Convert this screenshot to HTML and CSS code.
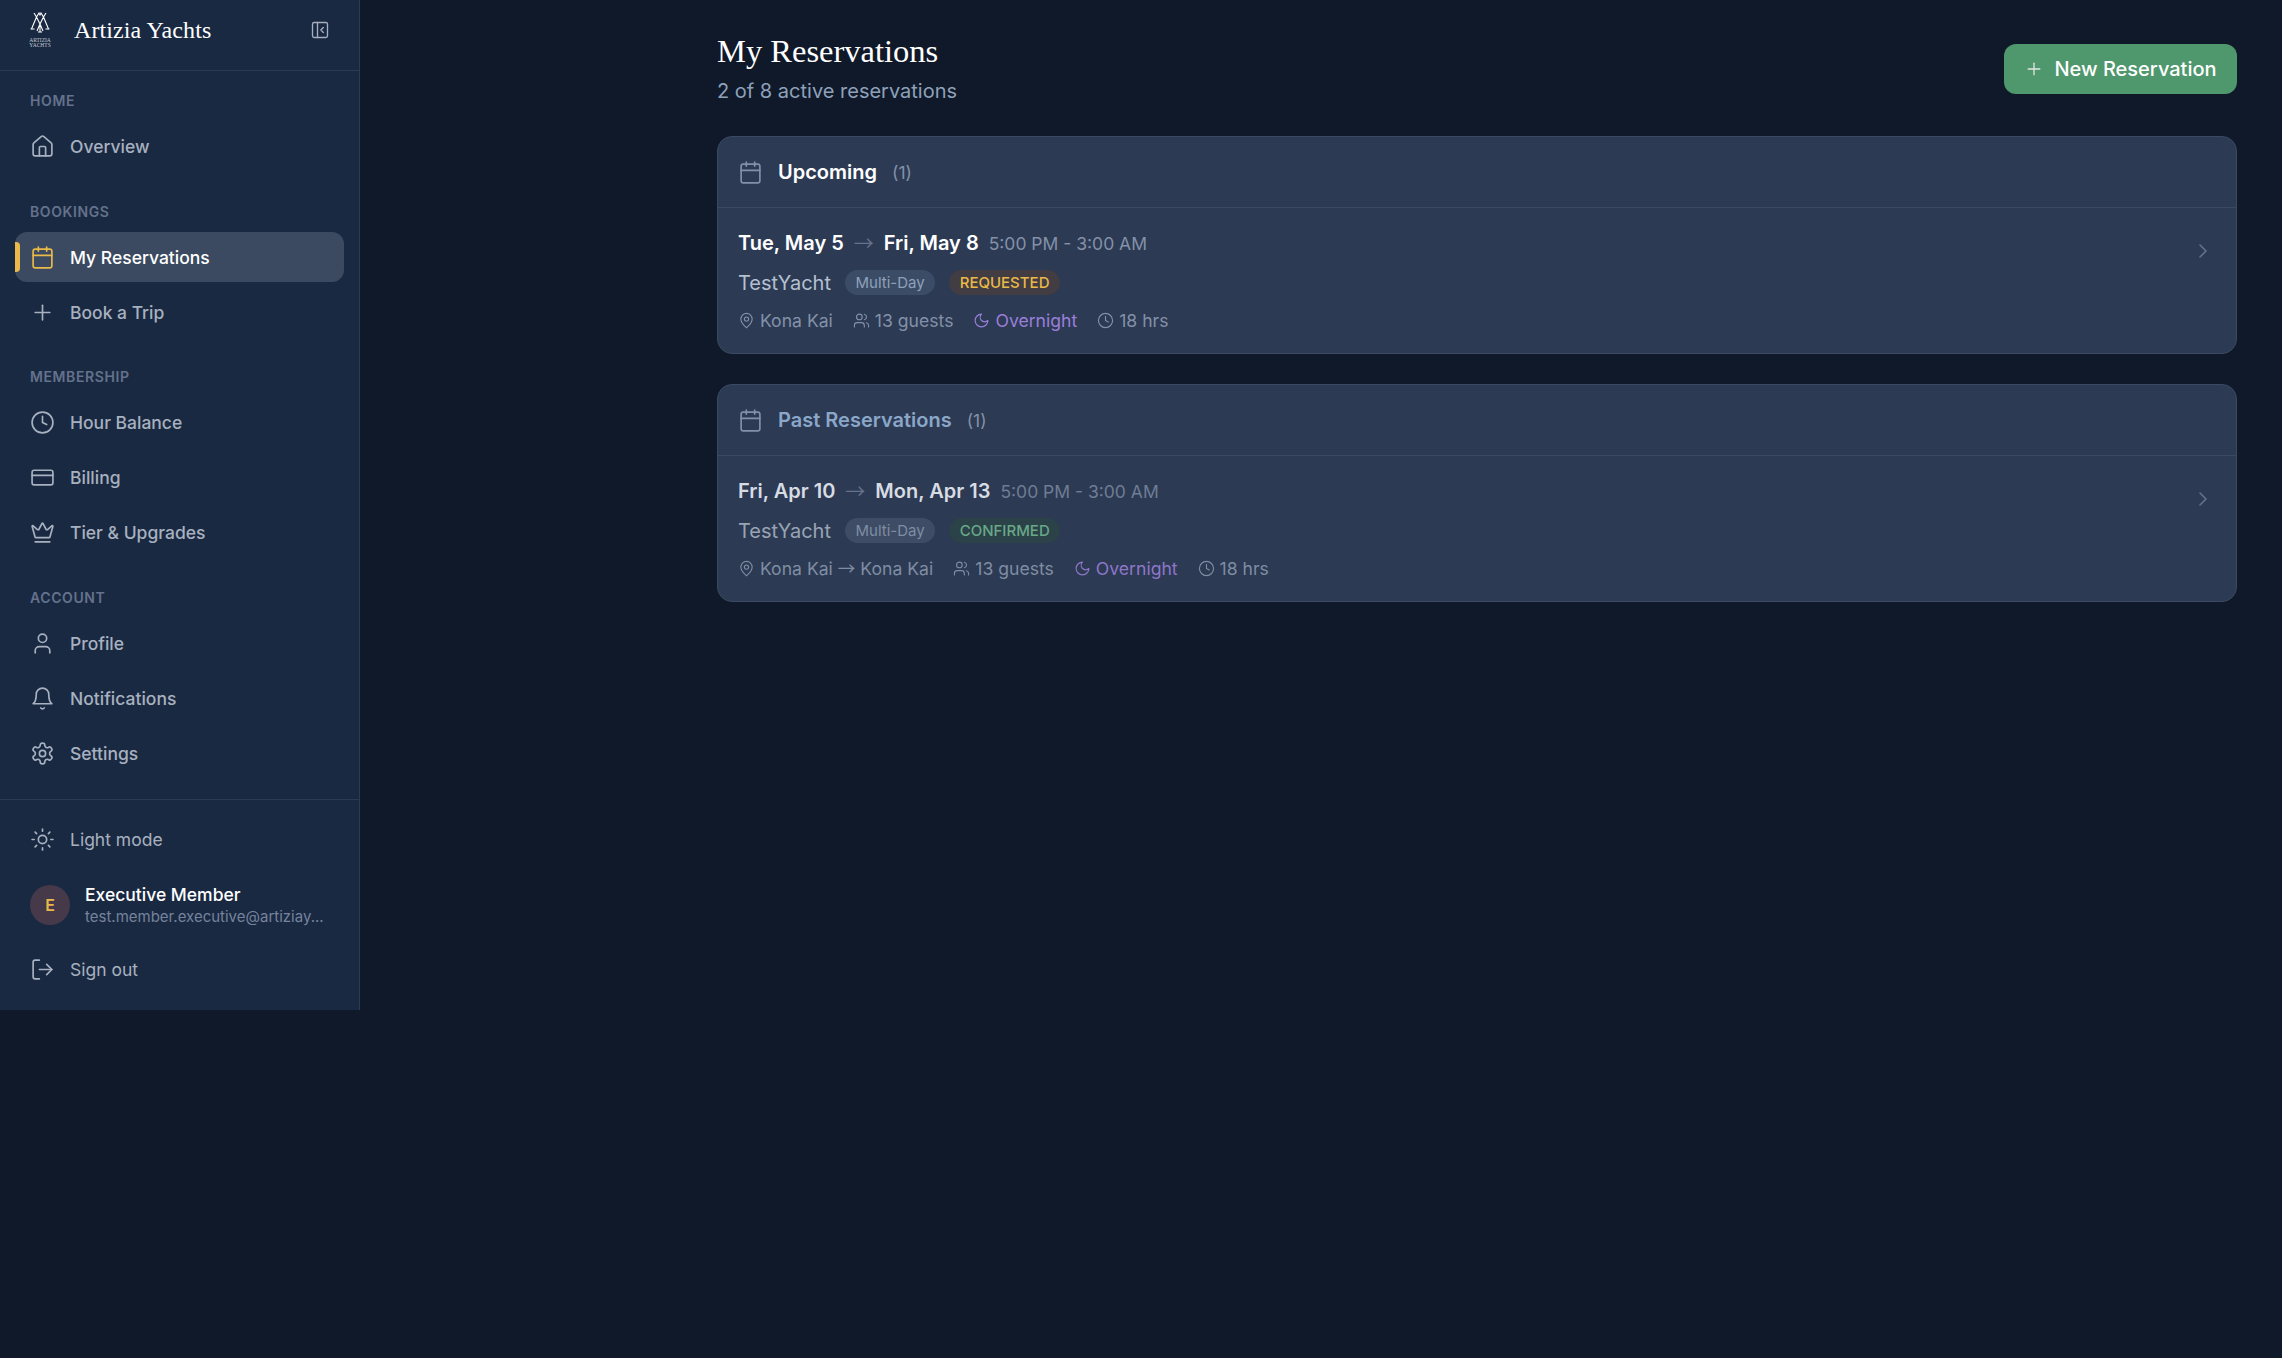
FILE: index.html
```html
<!DOCTYPE html>
<html lang="en">
<head>
    <meta charset="UTF-8">
    <meta name="viewport" content="width=device-width, initial-scale=1.0">
    <title>My Reservations - Artizia Yachts</title>
    <link rel="stylesheet" href="styles.css">
</head>
<body>
    <svg class="icon-defs" aria-hidden="true">
        <symbol id="i-home" viewBox="0 0 24 24"><path d="M15 21v-8a1 1 0 0 0-1-1h-4a1 1 0 0 0-1 1v8"/><path d="M3 10a2 2 0 0 1 .709-1.528l7-5.999a2 2 0 0 1 2.582 0l7 5.999A2 2 0 0 1 21 10v9a2 2 0 0 1-2 2H5a2 2 0 0 1-2-2z"/></symbol>
        <symbol id="i-calendar" viewBox="0 0 24 24"><path d="M8 2v4"/><path d="M16 2v4"/><rect width="18" height="18" x="3" y="4" rx="2"/><path d="M3 10h18"/></symbol>
        <symbol id="i-plus" viewBox="0 0 24 24"><path d="M5 12h14"/><path d="M12 5v14"/></symbol>
        <symbol id="i-clock" viewBox="0 0 24 24"><circle cx="12" cy="12" r="10"/><polyline points="12 6 12 12 16 14"/></symbol>
        <symbol id="i-card" viewBox="0 0 24 24"><rect width="20" height="14" x="2" y="5" rx="2"/><line x1="2" x2="22" y1="10" y2="10"/></symbol>
        <symbol id="i-crown" viewBox="0 0 24 24"><path d="M11.562 3.266a.5.5 0 0 1 .876 0L15.39 8.87a1 1 0 0 0 1.516.294L21.183 5.5a.5.5 0 0 1 .798.519l-2.834 10.246a1 1 0 0 1-.956.734H5.81a1 1 0 0 1-.957-.734L2.02 6.02a.5.5 0 0 1 .798-.519l4.276 3.664a1 1 0 0 0 1.516-.294z"/><path d="M5 21h14"/></symbol>
        <symbol id="i-user" viewBox="0 0 24 24"><path d="M19 21v-2a4 4 0 0 0-4-4H9a4 4 0 0 0-4 4v2"/><circle cx="12" cy="7" r="4"/></symbol>
        <symbol id="i-bell" viewBox="0 0 24 24"><path d="M6 8a6 6 0 0 1 12 0c0 7 3 9 3 9H3s3-2 3-9"/><path d="M10.3 21a1.94 1.94 0 0 0 3.4 0"/></symbol>
        <symbol id="i-settings" viewBox="0 0 24 24"><path d="M12.22 2h-.44a2 2 0 0 0-2 2v.18a2 2 0 0 1-1 1.73l-.43.25a2 2 0 0 1-2 0l-.15-.08a2 2 0 0 0-2.73.73l-.22.38a2 2 0 0 0 .73 2.73l.15.1a2 2 0 0 1 1 1.72v.51a2 2 0 0 1-1 1.74l-.15.09a2 2 0 0 0-.73 2.73l.22.38a2 2 0 0 0 2.73.73l.15-.08a2 2 0 0 1 2 0l.43.25a2 2 0 0 1 1 1.73V20a2 2 0 0 0 2 2h.44a2 2 0 0 0 2-2v-.18a2 2 0 0 1 1-1.73l.43-.25a2 2 0 0 1 2 0l.15.08a2 2 0 0 0 2.73-.73l.22-.39a2 2 0 0 0-.73-2.73l-.15-.08a2 2 0 0 1-1-1.74v-.5a2 2 0 0 1 1-1.74l.15-.09a2 2 0 0 0 .73-2.73l-.22-.38a2 2 0 0 0-2.73-.73l-.15.08a2 2 0 0 1-2 0l-.43-.25a2 2 0 0 1-1-1.73V4a2 2 0 0 0-2-2z"/><circle cx="12" cy="12" r="3"/></symbol>
        <symbol id="i-sun" viewBox="0 0 24 24"><circle cx="12" cy="12" r="4"/><path d="M12 2v2"/><path d="M12 20v2"/><path d="m4.93 4.93 1.41 1.41"/><path d="m17.66 17.66 1.41 1.41"/><path d="M2 12h2"/><path d="M20 12h2"/><path d="m6.34 17.66-1.41 1.41"/><path d="m19.07 4.93-1.41 1.41"/></symbol>
        <symbol id="i-logout" viewBox="0 0 24 24"><path d="M9 21H5a2 2 0 0 1-2-2V5a2 2 0 0 1 2-2h4"/><polyline points="16 17 21 12 16 7"/><line x1="21" x2="9" y1="12" y2="12"/></symbol>
        <symbol id="i-pin" viewBox="0 0 24 24"><path d="M20 10c0 4.993-5.539 10.193-7.399 11.799a1 1 0 0 1-1.202 0C9.539 20.193 4 14.993 4 10a8 8 0 0 1 16 0"/><circle cx="12" cy="10" r="3"/></symbol>
        <symbol id="i-users" viewBox="0 0 24 24"><path d="M16 21v-2a4 4 0 0 0-4-4H6a4 4 0 0 0-4 4v2"/><circle cx="9" cy="7" r="4"/><path d="M22 21v-2a4 4 0 0 0-3-3.87"/><path d="M16 3.13a4 4 0 0 1 0 7.75"/></symbol>
        <symbol id="i-moon" viewBox="0 0 24 24"><path d="M12 3a6 6 0 0 0 9 9 9 9 0 1 1-9-9Z"/></symbol>
        <symbol id="i-chevron" viewBox="0 0 24 24"><path d="m9 18 6-6-6-6"/></symbol>
        <symbol id="i-collapse" viewBox="0 0 24 24"><rect width="18" height="18" x="3" y="3" rx="2"/><path d="M9 3v18"/><path d="m16 15-3-3 3-3"/></symbol>
    </svg>

    <div class="layout">
        <aside class="sidebar">
            <div class="brand">
                <div class="logo">
                    <svg class="logo-mark" viewBox="0 0 20 21">
                        <path d="M4 1l2.5 4L9 1l1 2 1-2 2.500 4L16 1M6.500 5L1.500 17M13.500 5l5 12M6.500 5L10 12l3.500-7M10 12v8M8 20h4M10 12l-3 7M10 12l3 7M0.500 17h4M15.500 17h4"/>
                    </svg>
                    <span class="logo-text">ARTIZIA<br>YACHTS</span>
                </div>
                <span class="brand-name">Artizia Yachts</span>
                <svg class="icon brand-toggle"><use href="#i-collapse"/></svg>
            </div>

            <nav class="nav">
                <div class="nav-group">
                    <h4 class="nav-label">HOME</h4>
                    <a class="nav-item"><svg class="icon"><use href="#i-home"/></svg>Overview</a>
                </div>
                <div class="nav-group">
                    <h4 class="nav-label">BOOKINGS</h4>
                    <a class="nav-item active"><svg class="icon"><use href="#i-calendar"/></svg>My Reservations</a>
                    <a class="nav-item"><svg class="icon"><use href="#i-plus"/></svg>Book a Trip</a>
                </div>
                <div class="nav-group">
                    <h4 class="nav-label">MEMBERSHIP</h4>
                    <a class="nav-item"><svg class="icon"><use href="#i-clock"/></svg>Hour Balance</a>
                    <a class="nav-item"><svg class="icon"><use href="#i-card"/></svg>Billing</a>
                    <a class="nav-item"><svg class="icon"><use href="#i-crown"/></svg>Tier &amp; Upgrades</a>
                </div>
                <div class="nav-group">
                    <h4 class="nav-label">ACCOUNT</h4>
                    <a class="nav-item"><svg class="icon"><use href="#i-user"/></svg>Profile</a>
                    <a class="nav-item"><svg class="icon"><use href="#i-bell"/></svg>Notifications</a>
                    <a class="nav-item"><svg class="icon"><use href="#i-settings"/></svg>Settings</a>
                </div>
            </nav>

            <div class="sidebar-foot">
                <a class="nav-item plain"><svg class="icon"><use href="#i-sun"/></svg>Light mode</a>
                <div class="member">
                    <div class="avatar">E</div>
                    <div class="member-info">
                        <div class="member-name">Executive Member</div>
                        <div class="member-email">test.member.executive@artiziay...</div>
                    </div>
                </div>
                <a class="nav-item plain"><svg class="icon"><use href="#i-logout"/></svg>Sign out</a>
            </div>
        </aside>

        <main class="main">
            <header class="page-head">
                <div>
                    <h1 class="page-title">My Reservations</h1>
                    <p class="page-sub">2 of 8 active reservations</p>
                </div>
                <button class="btn-new"><svg class="icon"><use href="#i-plus"/></svg>New Reservation</button>
            </header>

            <section class="card">
                <div class="card-head">
                    <svg class="icon"><use href="#i-calendar"/></svg>
                    <h2 class="card-title">Upcoming</h2>
                    <span class="card-count">(1)</span>
                </div>
                <div class="res">
                    <div class="res-body">
                        <div class="res-dates">
                            <strong>Tue, May 5</strong>
                            <span class="arrow">→</span>
                            <strong>Fri, May 8</strong>
                            <span class="res-time">5:00 PM - 3:00 AM</span>
                        </div>
                        <div class="res-boat">
                            <span class="boat-name">TestYacht</span>
                            <span class="chip">Multi-Day</span>
                            <span class="chip status-requested">REQUESTED</span>
                        </div>
                        <div class="res-meta">
                            <span class="meta"><svg class="icon"><use href="#i-pin"/></svg>Kona Kai</span>
                            <span class="meta"><svg class="icon"><use href="#i-users"/></svg>13 guests</span>
                            <span class="meta overnight"><svg class="icon"><use href="#i-moon"/></svg>Overnight</span>
                            <span class="meta"><svg class="icon"><use href="#i-clock"/></svg>18 hrs</span>
                        </div>
                    </div>
                    <svg class="icon res-chevron"><use href="#i-chevron"/></svg>
                </div>
            </section>

            <section class="card past">
                <div class="card-head">
                    <svg class="icon"><use href="#i-calendar"/></svg>
                    <h2 class="card-title">Past Reservations</h2>
                    <span class="card-count">(1)</span>
                </div>
                <div class="res">
                    <div class="res-body">
                        <div class="res-dates">
                            <strong>Fri, Apr 10</strong>
                            <span class="arrow">→</span>
                            <strong>Mon, Apr 13</strong>
                            <span class="res-time">5:00 PM - 3:00 AM</span>
                        </div>
                        <div class="res-boat">
                            <span class="boat-name">TestYacht</span>
                            <span class="chip">Multi-Day</span>
                            <span class="chip status-confirmed">CONFIRMED</span>
                        </div>
                        <div class="res-meta">
                            <span class="meta"><svg class="icon"><use href="#i-pin"/></svg><span>Kona Kai <span class="route-arrow">→</span> Kona Kai</span></span>
                            <span class="meta"><svg class="icon"><use href="#i-users"/></svg>13 guests</span>
                            <span class="meta overnight"><svg class="icon"><use href="#i-moon"/></svg>Overnight</span>
                            <span class="meta"><svg class="icon"><use href="#i-clock"/></svg>18 hrs</span>
                        </div>
                    </div>
                    <svg class="icon res-chevron"><use href="#i-chevron"/></svg>
                </div>
            </section>
        </main>
    </div>
</body>
</html>
```

FILE: styles.css
```css
* {
    box-sizing: border-box;
}
body {
    margin: 0;
    background-color: #0f1929;
    color: #fff;
    font-family: Inter, "Liberation Sans", sans-serif;
}
h1, h2, h4, p {
    margin: 0;
}
.icon-defs {
    display: none;
}
.icon {
    width: 25px;
    height: 25px;
    flex: none;
    fill: none;
    stroke: currentColor;
    stroke-width: 1.6;
    stroke-linecap: round;
    stroke-linejoin: round;
}
.layout {
    display: flex;
    align-items: flex-start;
    min-height: 1358px;
}

/* sidebar */
.sidebar {
    width: 360px;
    height: 1010px;
    flex: none;
    background-color: #1a2942;
    border-right: 1px solid #2c3a54;
    display: flex;
    flex-direction: column;
}
.brand {
    height: 71px;
    flex: none;
    display: flex;
    align-items: center;
    padding: 0 30px 10px 30px;
    border-bottom: 1px solid #2c3a54;
}
.logo {
    width: 20px;
    display: flex;
    flex-direction: column;
    align-items: center;
    margin-right: 25px;
}
.logo-mark {
    width: 20px;
    height: 21px;
    fill: none;
    stroke: #fff;
    stroke-width: 1.1;
}
.logo-text {
    margin-top: 5px;
    font-family: "Liberation Serif", serif;
    font-size: 5.5px;
    line-height: 5.5px;
    text-align: center;
    color: #c3cad4;
    white-space: nowrap;
}
.brand-name {
    flex: 1;
    font-family: "Liberation Serif", serif;
    font-size: 24px;
    letter-spacing: 0.1px;
    margin-left: -1px;
}
.brand-toggle {
    width: 20px;
    height: 20px;
    color: #a5afbd;
    margin-right: -1px;
}
.nav {
    flex: 1;
    padding: 20px 15px 0;
    display: flex;
    flex-direction: column;
    gap: 30px;
}
.nav-group {
    display: flex;
    flex-direction: column;
    gap: 5px;
}
.nav-group:nth-child(odd) {
    margin-bottom: 1px;
}
.nav-label {
    margin-bottom: 5px;
    font-size: 14px;
    line-height: 20px;
    font-weight: 600;
    letter-spacing: 0.6px;
    color: #64728c;
    padding-left: 15px;
}
.nav-item {
    position: relative;
    height: 50px;
    flex: none;
    display: flex;
    align-items: center;
    gap: 15px;
    padding: 0 15px;
    border-radius: 12px;
    font-size: 17.5px;
    font-weight: 500;
    color: #a7b1bf;
}
.nav-item.active {
    background-color: #3b4a60;
    color: #fff;
}
.nav-item.active .icon {
    color: #e9b949;
}
.nav-item.active::before {
    content: "";
    position: absolute;
    left: 0;
    top: 10px;
    width: 5px;
    height: 30px;
    background-color: #e9b949;
    border-radius: 0 4px 4px 0;
}
.nav-item.plain {
    font-weight: 400;
}
.sidebar-foot {
    border-top: 1px solid #2c3a54;
    padding: 14px 15px 16px;
    display: flex;
    flex-direction: column;
    gap: 5px;
}
.member {
    display: flex;
    align-items: center;
    gap: 15px;
    padding: 2px 15px 0;
    height: 70px;
}
.avatar {
    width: 40px;
    height: 40px;
    flex: none;
    border-radius: 50%;
    background-color: #46394a;
    color: #e9b949;
    font-size: 16px;
    font-weight: 600;
    display: flex;
    align-items: center;
    justify-content: center;
}
.member-info {
    margin-top: 2px;
}
.member-name {
    font-size: 17.5px;
    line-height: 22px;
    font-weight: 500;
    color: #fff;
}
.member-email {
    font-size: 15px;
    line-height: 22px;
    color: #75839c;
    white-space: nowrap;
}

/* main column */
.main {
    flex: 1;
    padding: 30px 45px 0 357px;
}
.page-head {
    display: flex;
    justify-content: space-between;
    align-items: flex-start;
    margin-bottom: 30px;
}
.page-title {
    font-family: "Liberation Serif", serif;
    font-size: 32.5px;
    line-height: 42px;
    font-weight: 400;
}
.page-sub {
    margin-top: 4px;
    font-size: 20px;
    line-height: 30px;
    color: #8ea1ba;
}
.btn-new {
    width: 233px;
    height: 50px;
    margin-top: 14px;
    display: flex;
    align-items: center;
    justify-content: center;
    gap: 10px;
    background-color: #4f976c;
    color: #fff;
    border: none;
    border-radius: 12px;
    font-family: inherit;
    font-size: 20px;
    font-weight: 500;
}
.btn-new .icon {
    width: 20px;
    height: 20px;
    color: #dfe6e2;
}
.card {
    background-color: #2c3a54;
    border: 1px solid #3b4a63;
    border-radius: 15px;
    margin-bottom: 30px;
}
.card-head {
    height: 71px;
    display: flex;
    align-items: center;
    padding: 0 20px;
    border-bottom: 1px solid #3b4a63;
    color: #8391a8;
}
.card-title {
    margin-left: 15px;
    font-size: 20px;
    font-weight: 600;
    color: #fff;
}
.card-count {
    margin-left: 15px;
    font-size: 17.5px;
    color: #8391a8;
}
.res {
    display: flex;
    align-items: center;
    justify-content: space-between;
    padding: 20px;
}
.res-dates {
    display: flex;
    align-items: baseline;
    gap: 10px;
    height: 30px;
    line-height: 30px;
    font-size: 20px;
}
.res-dates strong {
    font-weight: 600;
    color: #fff;
}
.arrow {
    font-family: "Noto Sans CJK SC", sans-serif;
    font-size: 20px;
    line-height: 1;
    color: #64728c;
    transform: translateY(1px);
}
.route-arrow {
    font-family: "Noto Sans CJK SC", sans-serif;
    line-height: 1;
}
.res-time {
    font-size: 17.5px;
    color: #8391a8;
}
.res-boat {
    display: flex;
    align-items: center;
    gap: 15px;
    margin-top: 12px;
    height: 25px;
}
.boat-name {
    font-size: 20px;
    color: #b4c0d0;
    margin-right: -1px;
}
.chip {
    height: 25px;
    padding: 0 10.5px;
    display: flex;
    align-items: center;
    border-radius: 13px;
    background-color: #3b4c66;
    font-size: 15px;
    color: #8ea1ba;
}
.chip + .chip {
    margin-left: -1px;
}
.status-requested {
    background-color: #423d42;
    color: #e9b949;
    font-weight: 500;
}
.status-confirmed {
    background-color: #2b4248;
    color: #69a888;
    font-weight: 500;
}
.res-meta {
    display: flex;
    align-items: center;
    gap: 20px;
    margin-top: 13px;
    height: 25px;
    font-size: 17.6px;
    color: #8391a8;
}
.meta {
    display: flex;
    align-items: center;
    gap: 5px;
}
.meta .icon {
    width: 17px;
    height: 17px;
}
.overnight {
    color: #9b7fdb;
}
.res-chevron {
    width: 24px;
    height: 24px;
    margin-top: -59px;
    margin-right: 1px;
    color: #64728c;
}

/* past reservations are dimmed */
.past .card-title {
    color: #8ba7c8;
}
.past .res-dates strong {
    color: #d7dce3;
}
.past .res-time {
    color: #6f7d94;
}
.past .boat-name {
    color: #99a4b4;
}
.past .chip {
    color: #7f8da3;
    background-color: #3e4c66;
}
.past .status-confirmed {
    background-color: #2b4248;
    color: #69a888;
}
.past .meta {
    color: #7f8da3;
}
.past .overnight {
    color: #8f76c9;
}
```
